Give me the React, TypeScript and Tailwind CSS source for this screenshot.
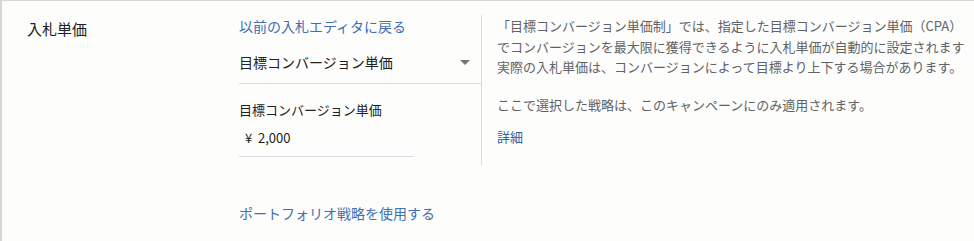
import React from "react";

const font = { fontFamily: '"Noto Sans CJK JP", "Noto Sans", sans-serif' };

function SelectField() {
  return (
    <div className="flex items-center justify-between border-b border-[#dadce0] pt-[16px] pb-[11px] pr-[10px]">
      <span className="text-[14px] leading-[20px] text-[#202124]">
        目標コンバージョン単価
      </span>
      {/* dropdown arrow */}
      <svg width="10" height="5" viewBox="0 0 10 5" className="mr-[1px]">
        <path d="M0 0 L10 0 L5 5 Z" fill="#757575" />
      </svg>
    </div>
  );
}

export default function App() {
  return (
    <div
      className="w-[974px] h-[241px] overflow-hidden bg-[#fdfdfb] border-t border-l-2 border-[#d6d6d6] flex"
      style={font}
    >
      {/* Section label */}
      <div className="w-[237px] shrink-0 pl-[25px] pt-[15px]">
        <span className="text-[15px] leading-[20px] text-[#202124]">入札単価</span>
      </div>

      <div className="flex flex-col">
        <div className="flex items-start">
          {/* Bid editor */}
          <div className="w-[242px] shrink-0 pt-[15px]">
            <a href="#" className="block text-[14px] leading-[20px] text-[#3f6eb5]">
              以前の入札エディタに戻る
            </a>
            <SelectField />
            <div className="mt-[16px] text-[13px] leading-[20px] text-[#202124]">
              目標コンバージョン単価
            </div>
            <div className="w-[175px] mt-[8px] pl-[6px] pb-[8px] border-b border-[#dadce0] text-[13px] leading-[20px] text-[#202124]">
              ¥&nbsp; 2,000
            </div>
          </div>

          {/* Help text */}
          <div className="mt-[14px] h-[150px] border-l border-[#dadce0] pl-[15px] pt-[1px] text-[13px] leading-[20.5px] text-[#5f6368] whitespace-nowrap">
            <p>「目標コンバージョン単価制」では、指定した目標コンバージョン単価（CPA）</p>
            <p>でコンバージョンを最大限に獲得できるように入札単価が自動的に設定されます</p>
            <p>実際の入札単価は、コンバージョンによって目標より上下する場合があります。</p>
            <p className="mt-[17px]">ここで選択した戦略は、このキャンペーンにのみ適用されます。</p>
            <a href="#" className="block mt-[12px] text-[#2f5fa8]">
              詳細
            </a>
          </div>
        </div>

        <a href="#" className="block mt-[38px] text-[14px] leading-[20px] text-[#3f6eb5]">
          ポートフォリオ戦略を使用する
        </a>
      </div>
    </div>
  );
}
